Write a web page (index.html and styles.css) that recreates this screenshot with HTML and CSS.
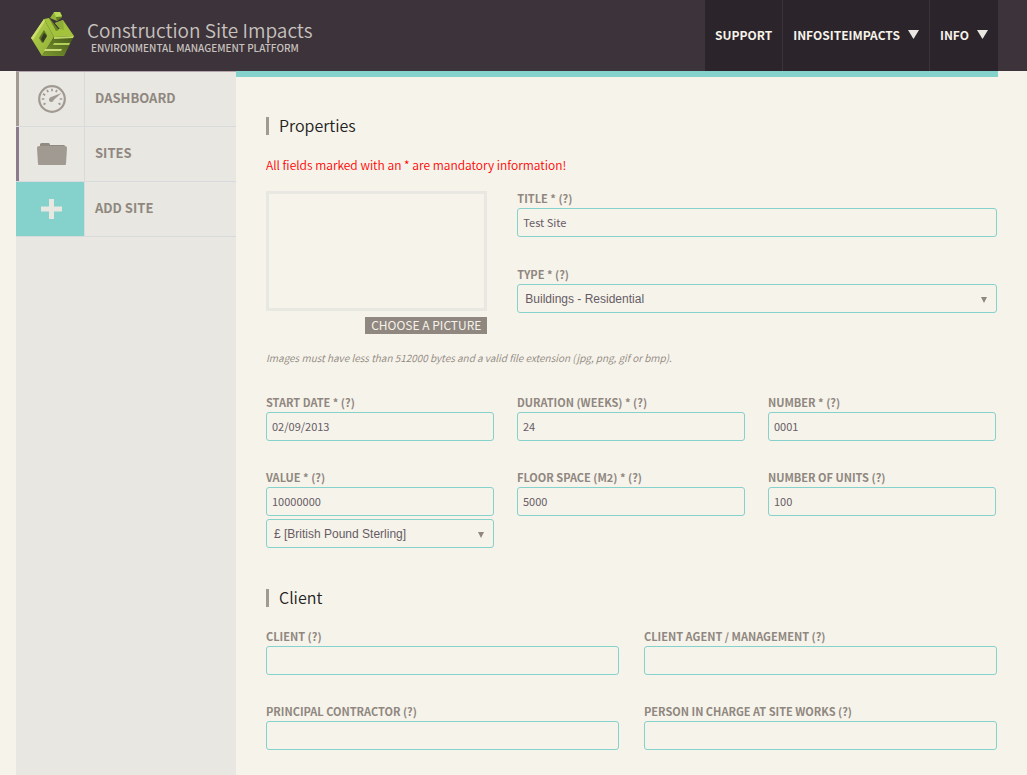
FILE: index.html
```html
<!DOCTYPE html>
<html lang="en">
<head>
<meta charset="utf-8">
<meta name="viewport" content="width=device-width, initial-scale=1">
<title>Construction Site Impacts</title>
<link rel="stylesheet" href="styles.css">
</head>
<body>
<header class="topbar">
  <a class="brand" href="#">
    <svg class="brand-logo" viewBox="0 0 44 44" aria-hidden="true">
      <defs>
        <linearGradient id="face" x1="0" y1="0" x2="1" y2="1"><stop offset="0" stop-color="#b9d350"/><stop offset="1" stop-color="#8cac33"/></linearGradient>
        <linearGradient id="side" x1="0" y1="1" x2="1" y2="0"><stop offset="0" stop-color="#7d9a30"/><stop offset="1" stop-color="#435618"/></linearGradient>
      </defs>
      <path d="M13 7 0 26 11 44 23 25z" fill="url(#face)"/>
      <path d="M23 25 43 24 33 44H11z" fill="url(#side)"/>
      <path d="M13 7 18 6 26 17H29L24 11 32 8 43 24 23 25z" fill="#a3c33d"/>
      <path d="M18 6 20 8 28 18 25 19z" fill="#6a8524"/>
      <path d="M24 11 32 8 33 18 29 17z" fill="#8dad37"/>
      <path d="M13 18 16 23 11 31 8 26z" fill="#5c7620"/>
      <path d="M13 21 16 24 12 31 10 27z" fill="#363b27"/>
      <path d="M13 7 0 26 2 28 14 9z" fill="#cbe06c"/>
      <path d="M23 25 43 24 42 26 23 27z" fill="#bdd663"/>
      <path d="M23 31H39L38 33H22z" fill="#b5d05a"/>
      <path d="M14 37H31L30 39H13z" fill="#c9dc78"/>
      <path d="M23 0H29L31 5 26 9 19 6z" fill="#92b538"/>
      <path d="M23 0H29L31 4 25 5z" fill="#bad85a"/>
      <path d="M25 5 31 5 26 9z" fill="#5f7a20"/>
    </svg>
    <span class="brand-text">
      <span class="brand-name">Construction Site Impacts</span>
      <span class="brand-tagline">ENVIRONMENTAL MANAGEMENT PLATFORM</span>
    </span>
  </a>
  <nav class="topnav" aria-label="Account">
    <a href="#">SUPPORT</a>
    <a href="#">INFOSITEIMPACTS <svg class="caret" viewBox="0 0 11 9" aria-hidden="true"><path d="M0 0H11L5.500 9z"/></svg></a>
    <a href="#">INFO <svg class="caret" viewBox="0 0 11 9" aria-hidden="true"><path d="M0 0H11L5.500 9z"/></svg></a>
  </nav>
</header>
<div class="layout">
  <nav class="sidebar" aria-label="Main">
    <a class="side-link side-dashboard" href="#">
      <span class="side-icon">
        <svg width="28" height="28" viewBox="0 0 28 28" fill="none" stroke="#a19a92" aria-hidden="true">
          <circle cx="14" cy="14" r="12.800" stroke-width="2.200"/>
          <path d="M14 3.800V6.300M9 5 10.200 7.200M19 5 17.800 7.200M5 8.700 7.200 10.200M3.800 14H6.300M21.700 14H24.200M5.500 19.500 7.500 18.200M22.500 19.500 20.500 18.200" stroke-width="1.700"/>
          <path d="M12.500 12.300 23.500 8 15.700 15A2.400 2.400 0 1 1 12.500 12.300z" fill="#a19a92" stroke="none"/>
        </svg>
      </span>
      <span class="side-label">DASHBOARD</span>
    </a>
    <a class="side-link side-sites" href="#">
      <span class="side-icon">
        <svg width="30" height="22" viewBox="0 0 30 22" aria-hidden="true">
          <path d="M3 4V1.500Q3 0 4.500 0H11.500Q13 0 13 2H27.500L28 5H1z" fill="#918a82"/>
          <path d="M0 5Q0 3 2 3H28Q30 3 30 5L29 21Q29 22 28 22H2Q1 22 1 21z" fill="#a19a92"/>
        </svg>
      </span>
      <span class="side-label">SITES</span>
    </a>
    <a class="side-link side-add" href="#">
      <span class="side-icon">
        <svg width="21" height="20" viewBox="0 0 21 20" aria-hidden="true"><path d="M8 0H13V7.500H21V12.500H13V20H8V12.500H0V7.500H8z" fill="#e8e7e1"/></svg>
      </span>
      <span class="side-label">ADD SITE</span>
    </a>
  </nav>
  <main class="content">
    <form>
      <h2 class="section-title">Properties</h2>
      <p class="mandatory">All fields marked with an * are mandatory information!</p>
      <div class="grid-three">
        <div class="picture">
          <div class="picture-frame"></div>
          <button class="picture-button" type="button">CHOOSE A PICTURE</button>
        </div>
        <div class="stack">
          <div class="field"><label for="title">TITLE * (?)</label><input id="title" type="text" value="Test Site"></div>
          <div class="field"><label for="type">TYPE * (?)</label><span class="select"><select id="type"><option>Buildings - Residential</option></select></span></div>
        </div>
      </div>
      <p class="hint">Images must have less than 512000 bytes and a valid file extension (jpg, png, gif or bmp).</p>
      <div class="grid-three grid-details">
        <div class="field"><label for="start">START DATE * (?)</label><input id="start" type="text" value="02/09/2013"></div>
        <div class="field"><label for="duration">DURATION (WEEKS) * (?)</label><input id="duration" type="text" value="24"></div>
        <div class="field"><label for="number">NUMBER * (?)</label><input id="number" type="text" value="0001"></div>
        <div class="field"><label for="value">VALUE * (?)</label><input id="value" type="text" value="10000000"><span class="select currency"><select aria-label="Currency"><option>£ [British Pound Sterling]</option></select></span></div>
        <div class="field"><label for="floor">FLOOR SPACE (M2) * (?)</label><input id="floor" type="text" value="5000"></div>
        <div class="field"><label for="units">NUMBER OF UNITS (?)</label><input id="units" type="text" value="100"></div>
      </div>
      <h2 class="section-title section-next">Client</h2>
      <div class="grid-two">
        <div class="field"><label for="client">CLIENT (?)</label><input id="client" type="text"></div>
        <div class="field"><label for="agent">CLIENT AGENT / MANAGEMENT (?)</label><input id="agent" type="text"></div>
        <div class="field"><label for="contractor">PRINCIPAL CONTRACTOR (?)</label><input id="contractor" type="text"></div>
        <div class="field"><label for="person">PERSON IN CHARGE AT SITE WORKS (?)</label><input id="person" type="text"></div>
      </div>
    </form>
  </main>
</div>
</body>
</html>
```

FILE: styles.css
```css
*, *::before, *::after { box-sizing: border-box; }

body {
  margin: 0;
  min-height: 100vh;
  display: flex;
  flex-direction: column;
  background: #f6f3ea;
  color: #8f8780;
  font-family: "Noto Sans CJK SC", "Open Sans", sans-serif;
  font-size: 12px;
  line-height: 16px;
}

h2, p { margin: 0; }
a { color: inherit; text-decoration: none; }

.topbar {
  display: flex;
  justify-content: space-between;
  height: 71px;
  padding: 0 29px 0 31px;
  background: #3d333a;
}

.brand { display: flex; align-items: center; gap: 12px; color: #c7c2bf; padding-bottom: 4px; }
.brand-logo { width: 44px; height: 44px; }
.brand-text { display: flex; flex-direction: column; padding-top: 4px; }
.brand-name { font-size: 19px; line-height: 23px; font-weight: 350; }
.brand-tagline { padding-left: 4px; font-size: 10px; line-height: 13px; font-weight: 500; }

.topnav { display: flex; background: #2b242b; color: #f6f3ea; font-weight: 700; }
.topnav a { display: flex; align-items: center; gap: 8px; padding: 0 10px 2px; }
.topnav a + a { border-left: 1px solid #3d333a; }
.caret { width: 11px; height: 9px; fill: #e8e7e1; }

.layout { flex: 1; display: flex; margin: 0 29px 0 16px; }

.sidebar { flex: 0 0 220px; background: #e8e7e1; border-top: 1px solid #b3a5ab; }
.side-link { display: flex; height: 55px; border-bottom: 1px solid #d8dade; }
.side-icon {
  width: 69px;
  display: flex;
  align-items: center;
  justify-content: center;
  border-left: 3px solid #a19a92;
  border-right: 1px solid #d8dade;
}
.side-sites .side-icon { border-left-color: #8b7b8c; }
.side-add .side-icon { background: #85d1cc; border-left-color: #85d1cc; }
.side-label { padding: 18px 10px; font-size: 13px; font-weight: 700; }

.content { flex: 1; min-width: 0; border-top: 6px solid #85d1cc; padding: 40px 1px 25px 30px; }

.section-title {
  border-left: 3px solid #a19a92;
  padding: 0 0 2px 10px;
  color: #222;
  font-size: 16px;
  line-height: 16px;
  font-weight: 350;
}
.section-next { margin: 41px 0 22px; }
.mandatory { margin: 22px 0 18px; color: #f00; font-weight: 350; }
.hint { margin: 16px 0 29px; font-size: 10px; font-style: italic; font-weight: 350; }

.grid-three { display: grid; grid-template-columns: repeat(3, 1fr); gap: 29px 23px; }
.grid-details { padding-right: 1px; }
.grid-two { display: grid; grid-template-columns: repeat(2, 1fr); gap: 29px 25px; }
.stack { grid-column: span 2; display: flex; flex-direction: column; gap: 30px; }

.field { display: flex; flex-direction: column; }
.field label { margin-bottom: 3px; font-size: 11px; line-height: 14px; font-weight: 700; }

.field input, .field select {
  width: 100%;
  height: 29px;
  margin: 0;
  padding: 0 5px 2px;
  border: 1px solid #85d1cc;
  border-radius: 3px;
  background: transparent;
  color: #665c66;
  font-family: inherit;
  font-size: 11px;
}
.field select { appearance: none; padding: 0 7px; font-family: "Liberation Sans", Arial, sans-serif; font-size: 12px; }
.select { position: relative; display: block; }
.select::after {
  content: "";
  position: absolute;
  right: 10px;
  top: 13px;
  border: solid transparent;
  border-width: 6px 3px 0;
  border-top-color: #8f8780;
  pointer-events: none;
}
.currency { margin-top: 3px; }

.picture { display: flex; flex-direction: column; align-items: flex-end; gap: 6px; padding-right: 7px; }
.picture-frame { width: 100%; height: 120px; border: 3px solid #e8e7e1; }
.picture-button {
  height: 17px;
  border: 0;
  padding: 0 6px 2px;
  background: #8f8780;
  color: #f6f3ea;
  font-family: inherit;
  font-size: 12px;
  line-height: 15px;
}
```
